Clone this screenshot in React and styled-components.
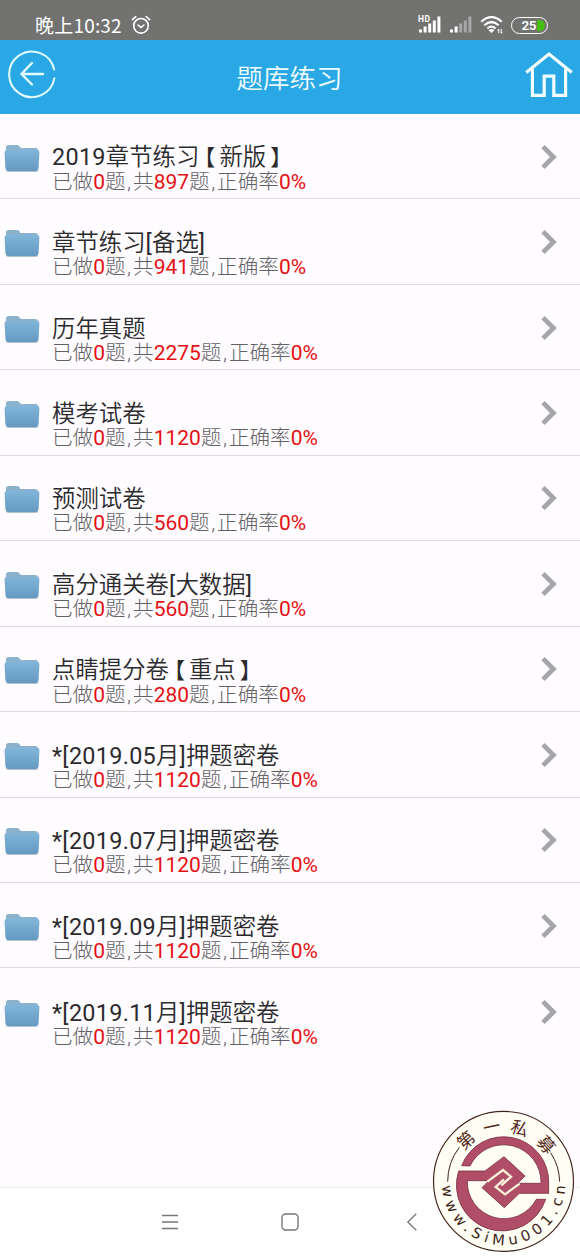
import React from 'react'
import styled, { createGlobalStyle } from 'styled-components'

const papers = [
    { title: '2019章节练习【新版】', total: 897 },
    { title: '章节练习[备选]', total: 941 },
    { title: '历年真题', total: 2275 },
    { title: '模考试卷', total: 1120 },
    { title: '预测试卷', total: 560 },
    { title: '高分通关卷[大数据]', total: 560 },
    { title: '点睛提分卷【重点】', total: 280 },
    { title: '*[2019.05月]押题密卷', total: 1120 },
    { title: '*[2019.07月]押题密卷', total: 1120 },
    { title: '*[2019.09月]押题密卷', total: 1120 },
    { title: '*[2019.11月]押题密卷', total: 1120 },
]

const AlarmIcon = () => (
    <svg width="20" height="20" viewBox="0 0 20 20" fill="none" stroke="#fff" strokeWidth="1.6" strokeLinecap="round">
        <circle cx="10" cy="10.8" r="7.3" />
        <path d="M1.4 4.6 4.8 1.6M18.6 4.6 15.2 1.6M7 10l3 2.4 3-2.4" />
    </svg>
)

const SignalIcon = ({ level, hd }) => (
    <svg width="24" height="20" viewBox="0 0 24 20">
        {hd && (
            <text x="0" y="7" fill="#fff" fontFamily="Roboto, sans-serif" fontSize="8.5" fontWeight="700" textLength="12">
                HD
            </text>
        )}
        {[3, 6, 9, 12, 16].map((h, i) => (
            <rect
                key={h}
                x={1 + i * 4.6}
                y={17.5 - h}
                width="3"
                height={h}
                fill="#fff"
                fillOpacity={i < level ? 1 : 0.38}
            />
        ))}
    </svg>
)

const WifiIcon = () => (
    <svg width="24" height="20" viewBox="0 0 24 20" fill="none" stroke="#fff" strokeWidth="2.2">
        <path d="M1.2 6.7Q11.5-2.5 21.8 6.7M4.3 10.3Q11.5 3.7 18.7 10.3M7.4 13.5Q11.5 9.9 15.6 13.5" />
        <path d="M11.5 18 8.5 15.2Q11.5 12.8 14.5 15.2Z" fill="#fff" stroke="none" />
        <path d="M18.8 14v4M18.8 14l-1.2 1.5M21.2 14v4.3M21.2 18.3l1.2-1.5" strokeWidth="1" />
    </svg>
)

const BackIcon = () => (
    <svg width="48" height="50" viewBox="0 0 48 50" fill="none" stroke="#e2fbff" strokeWidth="2" strokeLinecap="round">
        <path d="M46.2 20.5A22.8 22.8 0 1 0 46.4 29.2" />
        <path d="M35 25H14M24 14 13.5 25l10.5 10.5" strokeWidth="2.4" />
    </svg>
)

const HomeIcon = () => (
    <svg width="48" height="48" viewBox="0 0 48 48" fill="none" stroke="#f2fdff" strokeWidth="3.2">
        <path d="M1.2 22.6 24 4l22.8 18.6" />
        <path d="M7.4 19v26.4h11.8V26.2h9.6v19.2h11.8V19" />
    </svg>
)

const FolderIcon = () => (
    <svg width="36" height="29" viewBox="0 0 36 29">
        <defs>
            <linearGradient id="folder" x1="0" y1="0" x2="0" y2="1">
                <stop offset="0" stopColor="#83b6d9" />
                <stop offset="0.45" stopColor="#74a9cf" />
                <stop offset="1" stopColor="#6699c1" />
            </linearGradient>
        </defs>
        <rect x="2" y="23" width="32" height="5" rx="2.5" fill="#b4c0cb" />
        <path d="M2 6V3.5Q2 1 4.5 1H13q2 0 3 2l.5 1H31q3 0 3 3v8H2z" fill="#8cb2cb" />
        <path
            d="M3.5 5.5h29Q35.5 5.5 35.4 9L34.6 23.5q-.2 3.5-3.5 3.5H4.900q-3.300 0-3.500-3.5L.6 9Q.5 5.5 3.5 5.5z"
            fill="url(#folder)"
        />
    </svg>
)

const ArrowIcon = () => (
    <svg width="16" height="26" viewBox="0 0 16 26" fill="none" stroke="#a6a6a8" strokeWidth="4.8">
        <path d="M2 2.6 12.4 13 2 23.4" />
    </svg>
)

const Watermark = () => (
    <svg width="155" height="157" viewBox="0 0 465 471">
        <defs>
            <path id="site" d="M51 250A185 185 0 0 0 421 250" />
        </defs>
        <circle cx="235.5" cy="244" r="210" fill="#fffef4" stroke="#40241a" strokeWidth="3.5" />
        <g fill="none" stroke="#40241a" strokeWidth="3">
            <path d="M68 245A168 168 0 0 1 103 142" />
            <path d="M377 158A168 168 0 0 1 404 245" />
        </g>
        <path
            d="M110 197A135 135 0 0 1 371 250V280H283L238 323 171 263 192 242H127A110 110 0 0 0 334 298H362A135 135 0 0 1 101 213H180L237 170 300 228 278 250H348A112 112 0 0 0 135 198Z"
            fill="#b04e67"
            stroke="#7b3042"
            strokeWidth="2.5"
        />
        <g fill="none" stroke="#fff3dc" strokeWidth="7">
            <path d="M187 245 234 210 258 230 229 256" />
            <path d="M284 251 240 283 212 261 237 238" />
        </g>
        <g fill="#55291d" fontFamily="'Noto Sans CJK SC', sans-serif" fontSize="52" textAnchor="middle">
            <text transform="translate(123 121) rotate(-42)" y="19">第</text>
            <text transform="translate(200 80) rotate(-12)" y="19">一</text>
            <text transform="translate(284 85) rotate(17)" y="19">私</text>
            <text transform="translate(364 134) rotate(49)" y="19">募</text>
        </g>
        <text fill="#40241a" fontFamily="'DejaVu Sans', sans-serif" fontSize="44" textLength="566">
            <textPath href="#site" startOffset="8">www.SiMu001.cn</textPath>
        </text>
    </svg>
)

// Latin runs and brackets are set a little differently from the Chinese text
const renderTitle = (title) =>
    title.split(/([【】]|[\x20-\x7e]+)/).map((part, i) => {
        if (part === '【' || part === '】') {
            return (
                <Bracket key={i} $open={part === '【'}>
                    {part}
                </Bracket>
            )
        }
        if (/^[\x20-\x7e]+$/.test(part)) return <Latin key={i}>{part}</Latin>
        return part
    })

const PaperRow = ({ title, total }) => (
    <Row>
        <FolderIcon />
        <TextBox>
            <Title>{renderTitle(title)}</Title>
            <Stats>
                已做<Count>0</Count>题<Comma>,</Comma>共<Count>{total}</Count>题<Comma>,</Comma>正确率
                <Count>0%</Count>
            </Stats>
        </TextBox>
        <ArrowWrapper>
            <ArrowIcon />
        </ArrowWrapper>
    </Row>
)

const App = () => {
    return (
        <Screen>
            <GlobalStyle />
            <StatusBar>
                <Clock>晚上10:32</Clock>
                <AlarmIcon />
                <StatusIcons>
                    <SignalIcon level={5} hd />
                    <SignalIcon level={2} />
                    <WifiIcon />
                    <Battery>
                        25
                        <BatteryLevel />
                    </Battery>
                </StatusIcons>
            </StatusBar>
            <Header>
                <BackIcon />
                <HeaderTitle>题库练习</HeaderTitle>
                <HomeIcon />
            </Header>
            <List>
                {papers.map((paper) => (
                    <PaperRow key={paper.title} {...paper} />
                ))}
            </List>
            <NavBar>
                <svg width="18" height="18" viewBox="0 0 18 18" stroke="#777" strokeWidth="1.3">
                    <path d="M1 2.5h16M1 9h16M1 15.5h16" />
                </svg>
                <svg width="18" height="18" viewBox="0 0 18 18" fill="none" stroke="#777" strokeWidth="1.4">
                    <rect x="1" y="1" width="16" height="16" rx="3.5" />
                </svg>
                <svg width="18" height="18" viewBox="0 0 18 18" fill="none" stroke="#777" strokeWidth="1.3">
                    <path d="M15.3.8 6.8 9l8.5 8.2" />
                </svg>
            </NavBar>
            <WatermarkWrapper>
                <Watermark />
            </WatermarkWrapper>
        </Screen>
    )
}

export default App

const GlobalStyle = createGlobalStyle`
    * {
        box-sizing: border-box;
    }

    body {
        margin: 0;
        font-family: Roboto, 'Noto Sans CJK SC', sans-serif;
    }

    svg {
        display: block;
        flex-shrink: 0;
    }
`

const Screen = styled.div`
    position: relative;
    display: flex;
    flex-direction: column;
    width: 580px;
    height: 1257px;
    overflow: hidden;
    background-color: #fffcff;
`

const StatusBar = styled.div`
    display: flex;
    align-items: center;
    height: 40px;
    padding: 10px 32px 0 35px;
    background-color: #727371;
    color: white;
`

const Clock = styled.div`
    width: 87px;
    margin-right: 9px;
    font-family: 'Noto Sans CJK SC', sans-serif;
    font-size: 19px;
    letter-spacing: 0.2px;
    line-height: 28px;
    white-space: nowrap;
`

const StatusIcons = styled.div`
    display: flex;
    align-items: center;
    gap: 7px;
    margin-left: auto;
`

const Battery = styled.div`
    display: flex;
    align-items: center;
    justify-content: flex-end;
    width: 37px;
    height: 17px;
    padding-right: 2px;
    border: 1.5px solid white;
    border-radius: 9px;
    font-size: 13.5px;
    font-weight: 600;
    letter-spacing: -0.5px;
    line-height: 15px;
`

const BatteryLevel = styled.div`
    width: 8px;
    height: 11px;
    margin-left: 1px;
    border-radius: 1px 6px 6px 1px;
    background-color: #46bd10;
`

const Header = styled.div`
    display: flex;
    align-items: center;
    justify-content: space-between;
    height: 74px;
    padding: 0 7px 6px 8px;
    background-color: #29a8e5;
`

const HeaderTitle = styled.div`
    margin-left: -2px;
    padding-top: 4px;
    color: #effcff;
    font-size: 26.5px;
    font-weight: 350;
`

const List = styled.div`
    flex: 1;
`

const Row = styled.div`
    display: flex;
    align-items: center;
    height: 85.44px;
    padding: 4px 23px 0 4px;
    border-bottom: 1px solid #dedbdf;

    &:last-child {
        border-bottom: none;
    }
`

const TextBox = styled.div`
    flex: 1;
    margin-left: 12px;
    padding-top: 23px;
    white-space: nowrap;
`

const Title = styled.div`
    color: #2b2b2e;
    font-size: 23.4px;
    font-weight: 350;
    line-height: 24px;
`

const Latin = styled.span`
    font-weight: 400;
    letter-spacing: 0.3px;
`

const Bracket = styled.span`
    margin-left: ${({ $open }) => ($open ? 5 : 4)}px;
    margin-right: ${({ $open }) => ($open ? 4 : 0)}px;
    font-size: 22px;
    font-feature-settings: 'halt';
`

const Stats = styled.div`
    height: 24px;
    color: #626266;
    font-size: 20.6px;
    font-weight: 300;
    line-height: 24px;
`

const Comma = styled.span`
    margin-right: 2px;
    margin-left: 1.5px;
`

const Count = styled.span`
    color: #e60f12;
    font-size: 21px;
    font-weight: 400;
`

const ArrowWrapper = styled.div`
    padding-bottom: 3px;
`

const NavBar = styled.div`
    display: flex;
    align-items: center;
    justify-content: center;
    gap: 102px;
    height: 70px;
    padding-bottom: 2px;
    border-top: 1px solid #ededed;
    background-color: white;
`

const WatermarkWrapper = styled.div`
    position: absolute;
    right: 0;
    bottom: 0;
`
